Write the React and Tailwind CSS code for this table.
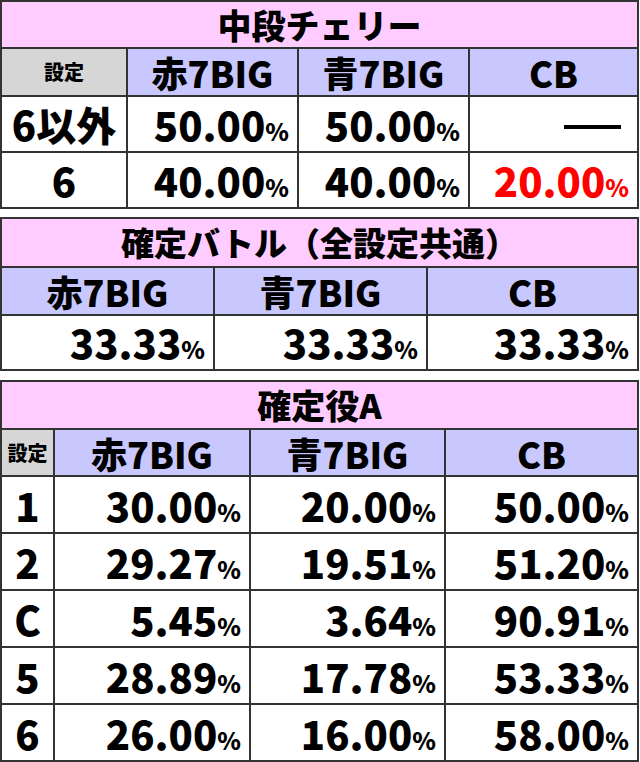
import React from 'react';

const font = { fontFamily: '"Noto Sans CJK JP", "Noto Sans", sans-serif' };

function Pct({ value, red }) {
  return (
    <span className={red ? 'text-[#ff0000]' : 'text-black'}>
      <span className="text-[40px]">{value}</span>
      <span className="text-[24px]">%</span>
    </span>
  );
}

const cell = 'border-2 border-[#333333] p-0';
const head = `${cell} bg-[#c8c8ff] text-center text-[36px] leading-none`;
const title = `${cell} bg-[#ffccff] text-center text-[34px] leading-none`;
const num = `${cell} text-right pr-[8px] leading-none`;

function CherryTable() {
  const rows = [
    { label: '6以外', a: '50.00', b: '50.00', c: null },
    { label: '6', a: '40.00', b: '40.00', c: '20.00' },
  ];
  return (
    <table className="w-[639px] table-fixed border-collapse">
      <colgroup>
        <col className="w-[126px]" />
        <col className="w-[171px]" />
        <col className="w-[171px]" />
        <col />
      </colgroup>
      <tbody>
        <tr className="h-[47px]">
          <td colSpan={4} className={title}>中段チェリー</td>
        </tr>
        <tr className="h-[48px]">
          <td className={`${cell} bg-[#d6d6d6] text-center text-[20px] leading-none`}>設定</td>
          <td className={head}>赤7BIG</td>
          <td className={head}>青7BIG</td>
          <td className={head}>CB</td>
        </tr>
        {rows.map((r) => (
          <tr key={r.label} className="h-[56px]">
            <td className={`${cell} text-center text-[40px] leading-none`}>{r.label}</td>
            <td className={num}><Pct value={r.a} /></td>
            <td className={num}><Pct value={r.b} /></td>
            <td className={num}>
              {r.c ? (
                <Pct value={r.c} red />
              ) : (
                <span className="inline-block w-[57px] h-[4px] bg-black align-middle mr-[8px]" />
              )}
            </td>
          </tr>
        ))}
      </tbody>
    </table>
  );
}

function BattleTable() {
  return (
    <table className="w-[639px] table-fixed border-collapse">
      <colgroup>
        <col className="w-[213px]" />
        <col className="w-[213px]" />
        <col />
      </colgroup>
      <tbody>
        <tr className="h-[49px]">
          <td colSpan={3} className={`${cell} bg-[#ffccff] text-center text-[33px] leading-none`}>
            確定バトル（全設定共通）
          </td>
        </tr>
        <tr className="h-[48px]">
          <td className={head}>赤7BIG</td>
          <td className={head}>青7BIG</td>
          <td className={head}>CB</td>
        </tr>
        <tr className="h-[55px]">
          <td className={num}><Pct value="33.33" /></td>
          <td className={num}><Pct value="33.33" /></td>
          <td className={num}><Pct value="33.33" /></td>
        </tr>
      </tbody>
    </table>
  );
}

function RoleTable() {
  const rows = [
    ['1', '30.00', '20.00', '50.00'],
    ['2', '29.27', '19.51', '51.20'],
    ['C', '5.45', '3.64', '90.91'],
    ['5', '28.89', '17.78', '53.33'],
    ['6', '26.00', '16.00', '58.00'],
  ];
  return (
    <table className="w-[639px] table-fixed border-collapse">
      <colgroup>
        <col className="w-[53px]" />
        <col className="w-[196px]" />
        <col className="w-[195px]" />
        <col />
      </colgroup>
      <tbody>
        <tr className="h-[48px]">
          <td colSpan={4} className={title}>確定役A</td>
        </tr>
        <tr className="h-[47px]">
          <td className={`${cell} bg-[#d6d6d6] text-center text-[20px] leading-none`}>設定</td>
          <td className={head}>赤7BIG</td>
          <td className={head}>青7BIG</td>
          <td className={head}>CB</td>
        </tr>
        {rows.map((r) => (
          <tr key={r[0]} className="h-[57px]">
            <td className={`${cell} text-center text-[40px] leading-none`}>{r[0]}</td>
            <td className={num}><Pct value={r[1]} /></td>
            <td className={num}><Pct value={r[2]} /></td>
            <td className={num}><Pct value={r[3]} /></td>
          </tr>
        ))}
      </tbody>
    </table>
  );
}

export default function App() {
  return (
    <div className="w-[640px] h-[762px] bg-white font-black text-black overflow-hidden flex flex-col" style={font}>
      <CherryTable />
      <div className="h-[11px]" />
      <BattleTable />
      <div className="h-[13px]" />
      <RoleTable />
    </div>
  );
}
